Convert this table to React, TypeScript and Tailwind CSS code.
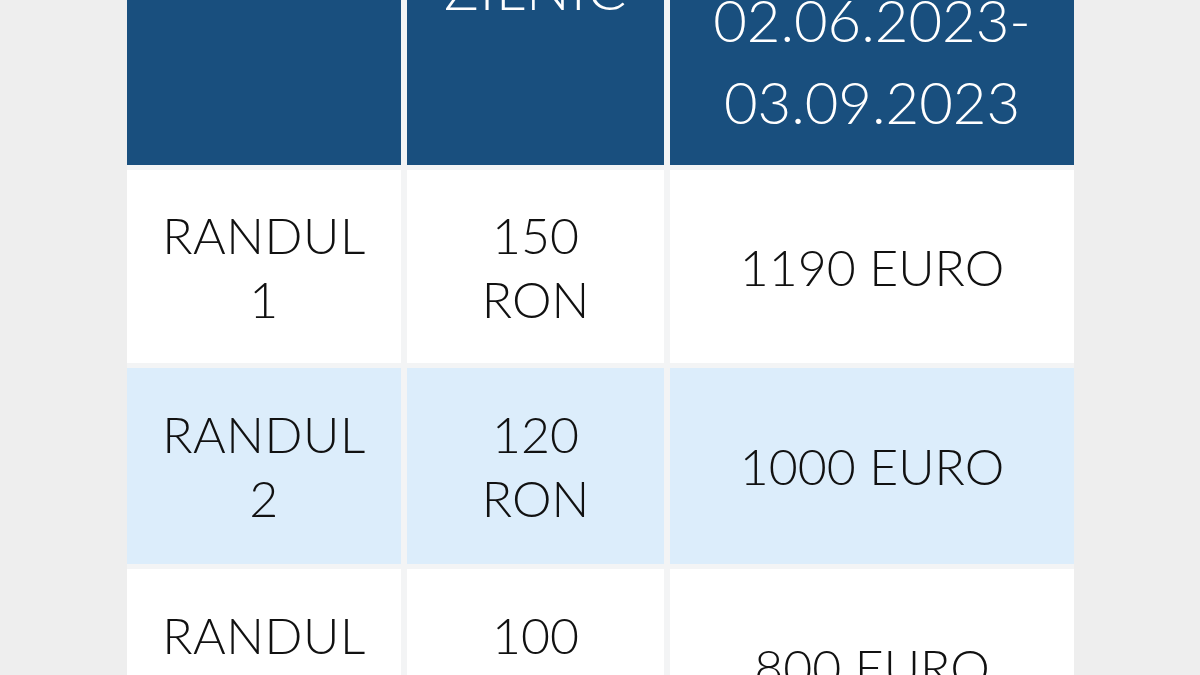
import React from "react";

const rows = [
  { a: ["RANDUL", "1"], b: ["150", "RON"], c: "1190 EURO", bg: "bg-white" },
  { a: ["RANDUL", "2"], b: ["120", "RON"], c: "1000 EURO", bg: "bg-[#dcedfb]" },
  { a: ["RANDUL", "3"], b: ["100", "RON"], c: "800 EURO", bg: "bg-white" },
];

function Lines({ lines }: { lines: string[] }) {
  return (
    <div className="flex flex-col items-center">
      {lines.map((l, i) => (
        <span key={i}>{l}</span>
      ))}
    </div>
  );
}

export default function App() {
  return (
    <div
      className="h-[675px] w-[1200px] overflow-hidden bg-[#eeeeee]"
      style={{ fontFamily: "Lato, 'Open Sans', sans-serif" }}
    >
      <div className="ml-[127px] grid w-[947px] grid-cols-[274px_257px_404px] grid-rows-[165px_193px_196px_195px] gap-x-[6px] gap-y-[5px] bg-[#f3f4f5]">
        {/* header */}
        <div className="bg-[#194f7e]" />
        <div className="flex flex-col items-center justify-end bg-[#194f7e] pb-[136px] text-[58px] font-light leading-[82px] tracking-[1px] text-white">
          <span>ZILNIC</span>
        </div>
        <div className="flex flex-col items-center justify-end bg-[#194f7e] pb-[22px] text-[58px] font-light leading-[82px] text-white">
          <span>02.06.2023-</span>
          <span>03.09.2023</span>
        </div>

        {rows.map((r, i) => (
          <React.Fragment key={i}>
            <div className={`flex items-center justify-center text-center text-[50px] font-light leading-[64px] tracking-[0.5px] text-[#111111] ${r.bg}`}>
              <Lines lines={r.a} />
            </div>
            <div className={`flex items-center justify-center text-center text-[50px] font-light leading-[64px] text-[#111111] ${r.bg}`}>
              <Lines lines={r.b} />
            </div>
            <div className={`flex items-center justify-center text-center text-[50px] font-light leading-[64px] text-[#111111] ${r.bg}`}>
              <span>{r.c}</span>
            </div>
          </React.Fragment>
        ))}
      </div>
    </div>
  );
}
